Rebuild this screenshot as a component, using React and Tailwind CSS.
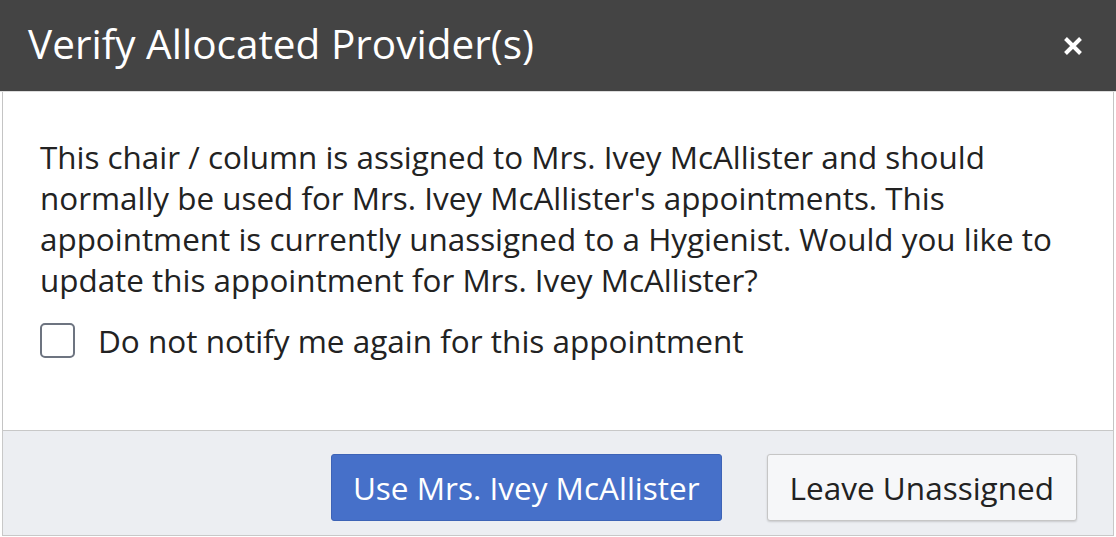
import React, { useState } from 'react';

const PROVIDER = 'Mrs. Ivey McAllister';

const App = () => {
  const [dontNotify, setDontNotify] = useState(false);

  return (
    <div className="w-[1116px] h-[537px] bg-white font-['Open_Sans',sans-serif] text-[#222]">
      {/* Dialog header */}
      <div className="h-[92px] bg-[#444444] border-b border-[#dcdcdc] flex items-center justify-between pl-[28px] pr-[32px]">
        <h1 className="text-[40.5px] text-white leading-none -mt-[2px]">Verify Allocated Provider(s)</h1>
        <button className="text-white w-[22px] h-[22px] flex items-center justify-center">
          <svg width="20" height="20" viewBox="0 0 20 20">
            <path d="M2.5 2.5 L17.5 17.5 M17.5 2.5 L2.5 17.5" stroke="white" strokeWidth="4" />
          </svg>
        </button>
      </div>

      {/* Dialog body */}
      <div className="mx-[2px] border-x border-[#c4c4c4] h-[338px] pl-[37px] pt-[44px]">
        <p className="w-[1024px] text-[31.4px] leading-[41px]">
          This chair / column is assigned to {PROVIDER} and should normally be used for {PROVIDER}'s
          appointments. This appointment is currently unassigned to a Hygienist. Would you like to
          update this appointment for {PROVIDER}?
        </p>
        <label className="mt-[20px] flex items-center gap-[23px] cursor-pointer">
          <span
            className="w-[35px] h-[35px] shrink-0 rounded-[5px] border-2 border-[#6d7480] bg-white"
            onClick={() => setDontNotify(!dontNotify)}
          />
          <span className="text-[31.5px] leading-[41px]">Do not notify me again for this appointment</span>
        </label>
      </div>

      {/* Dialog footer */}
      <div className="mx-[2px] h-[106px] bg-[#eceef2] border border-[#c8c8c8] flex items-start justify-end gap-[45px] pr-[36px] pt-[23px]">
        <button className="h-[67px] px-[21px] rounded-[3px] bg-[#4670c9] border border-[#3d63b6] text-white text-[31.5px] leading-none">
          Use {PROVIDER}
        </button>
        <button className="h-[67px] px-[22px] rounded-[3px] bg-[#f6f7f9] border border-[#c6c6c6] shadow-[0_1px_2px_rgba(0,0,0,0.15)] text-[#222] text-[31.5px] leading-none">
          Leave Unassigned
        </button>
      </div>
    </div>
  );
};

export default App;
